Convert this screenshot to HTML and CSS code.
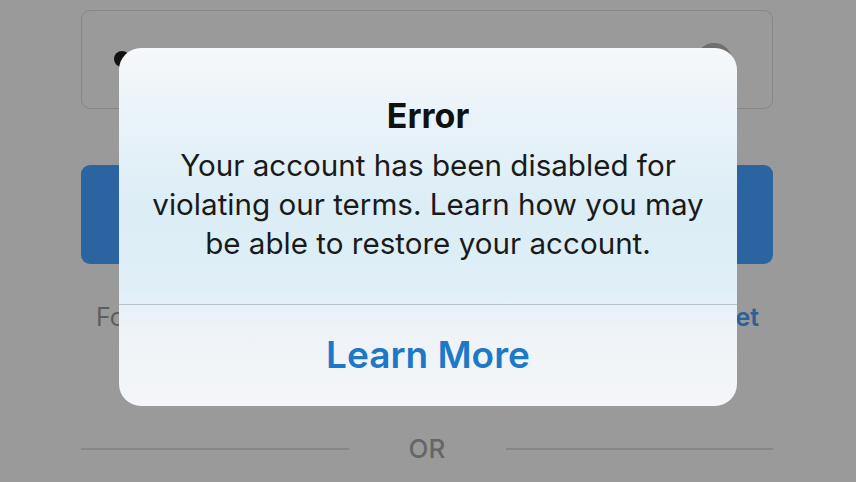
FILE: index.html
```html
<!DOCTYPE html>
<html>
<head>
<meta charset="utf-8">
<link rel="stylesheet" href="styles.css">
</head>
<body>
<div class="screen">
  <div class="form">
    <div class="field">
      <span class="dot"></span>
      <span class="clear"></span>
    </div>
    <div class="login-btn"></div>
    <div class="forgot">
      <span class="forgot-text">Forgot password?</span>
      <span class="forgot-link">Reset</span>
    </div>
    <div class="or-row">
      <span class="or-line"></span>
      <span class="or-text">OR</span>
      <span class="or-line"></span>
    </div>
  </div>
  <div class="alert">
    <div class="alert-body">
      <div class="alert-title">Error</div>
      <div class="alert-msg">Your account has been disabled for<br>violating our terms. Learn how you may<br>be able to restore your account.</div>
    </div>
    <div class="alert-action">Learn More</div>
  </div>
</div>
</body>
</html>
```
FILE: styles.css
```css
* { box-sizing: border-box; }
html, body {
  margin: 0;
  padding: 0;
  width: 856px;
  height: 482px;
  overflow: hidden;
  background: #9a9a9a;
  font-family: Inter, "Liberation Sans", sans-serif;
}
.screen {
  position: relative;
  width: 856px;
  height: 482px;
}
.form {
  padding: 10px 83px 0 81px;
  display: flex;
  flex-direction: column;
}
.field {
  position: relative;
  height: 99px;
  border: 1.5px solid #878787;
  border-radius: 9px;
}
.dot {
  position: absolute;
  left: 32px;
  top: 40px;
  width: 16px;
  height: 16px;
  border-radius: 50%;
  background: #111;
}
.clear {
  position: absolute;
  left: 614px;
  top: 32px;
  width: 36px;
  height: 36px;
  border-radius: 50%;
  background: #6f6f6f;
}
.login-btn {
  margin-top: 56px;
  height: 99px;
  border-radius: 9px;
  background: #2b64a1;
}
.forgot {
  margin-top: 35px;
  height: 36px;
  display: flex;
  justify-content: space-between;
  align-items: center;
  font-size: 25px;
  padding: 0 14px 0 15px;
}
.forgot-text { color: #5e5e5e; }
.forgot-link { color: #2e5f95; font-weight: 600; }
.or-row {
  margin-top: 98px;
  display: flex;
  align-items: center;
}
.or-line {
  flex: 1;
  height: 2px;
  background: #878787;
}
.or-text {
  width: 157px;
  text-align: center;
  color: #666;
  font-size: 26px;
  font-weight: 500;
}
.alert {
  position: absolute;
  left: 119px;
  top: 48px;
  width: 618px;
  height: 358px;
  border-radius: 22px;
  overflow: hidden;
  background: linear-gradient(180deg, #f6f8fa 0%, #e9f3f9 20%, #dcedf6 45%, #e0eff7 68%, #eef3f7 78%, #f4f6f9 100%);
  display: flex;
  flex-direction: column;
}
.alert-body {
  height: 257px;
  border-bottom: 1.5px solid #b9c2c8;
  padding-top: 49px;
  text-align: center;
}
.alert-title {
  font-size: 34px;
  font-weight: 700;
  color: #111;
  line-height: 38px;
}
.alert-msg {
  margin-top: 11px;
  font-size: 29.6px;
  line-height: 39px;
  color: #1a1a1a;
}
.alert-action {
  flex: 1;
  display: flex;
  align-items: center;
  justify-content: center;
  color: #1e78c8;
  font-size: 37px;
  font-weight: 600;
  padding-bottom: 2px;
}
```
